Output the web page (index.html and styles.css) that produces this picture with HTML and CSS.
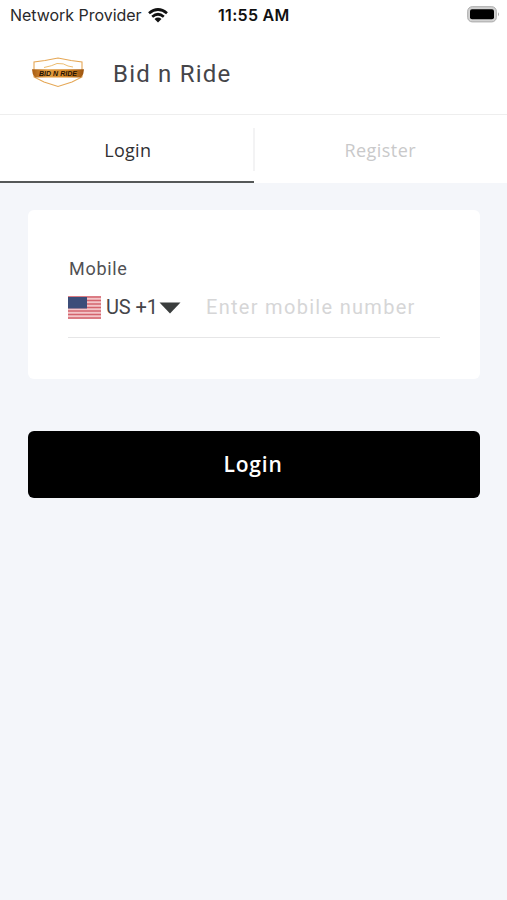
FILE: index.html
```html
<!DOCTYPE html>
<html lang="en">
<head>
<meta charset="utf-8">
<title>Bid n Ride</title>
<link rel="stylesheet" href="styles.css">
</head>
<body>
<div class="status">
  <span class="carrier">Network Provider</span>
  <svg class="wifi" width="20" height="15" viewBox="0 0 20 15" fill="none" stroke="#111" stroke-width="2.700"><path d="M1 5.3Q10-2.3 19 5.3M4.2 8.7Q10 3.8 15.8 8.7"/><path d="M6.5 11Q10 8.2 13.5 11L10 14.5Z" fill="#111" stroke="none"/></svg>
  <span class="time">11:55 AM</span>
  <svg class="battery" width="33" height="17" viewBox="0 0 33 17"><rect x=".7" y=".7" width="28.6" height="15.2" rx="4.5" fill="#d2d2d2" stroke="#aaa"/><rect x="3" y="3.3" width="24" height="10" rx="2" fill="#000"/><path d="M31 6.3q2 2 0 4z" fill="#aaa"/></svg>
</div>
<header class="header">
  <svg class="logo" width="52" height="31" viewBox="0 0 52 31">
    <defs><linearGradient id="gold"><stop offset="0" stop-color="#a85b10"/><stop offset=".3" stop-color="#e3a044"/><stop offset=".65" stop-color="#d98a27"/><stop offset="1" stop-color="#9c5410"/></linearGradient></defs>
    <path d="M2 13V5L13 3.5 26 1 39 3.5 50 5V20L40 25 26 29.500 12 25 2 20Z" fill="#fff" stroke="#e5a755" stroke-width="1.1"/>
    <path d="M12 10.500Q20 9 25 6.500Q32 6 36 9L41 10" fill="none" stroke="#edbd71"/>
    <path d="M0 12.200H52Q52 17 49 20.500H3Q0 17 0 12.200Z" fill="url(#gold)"/>
    <text class="logo-text" x="7" y="19" textLength="38">BID N RIDE</text>
  </svg>
  <h1 class="title">Bid n Ride</h1>
</header>
<nav class="tabs">
  <a class="tab active"><span>Login</span></a>
  <i class="divider"></i>
  <a class="tab"><span class="register">Register</span></a>
</nav>
<main class="content">
  <section class="card">
    <div class="label"><span>Mobile</span></div>
    <div class="field">
      <svg class="flag" width="33" height="23" viewBox="0 0 33 23"><path fill="#f3c5c8" d="M0 0h33v23H0z"/><path d="M0 1h33M0 4.500h33M0 8h33M0 11.500h33M0 15h33M0 18.500h33M0 22h33" stroke="#d4646d" stroke-width="1.500"/><path fill="#3c4d79" d="M0 1h19v11.500H0z"/></svg>
      <span class="code">US +1</span>
      <svg class="caret" width="22" height="12" viewBox="0 0 22 12"><path d="M.5.5h21L11 11.500z" fill="#3b3e3e"/></svg>
      <span class="placeholder">Enter mobile number</span>
    </div>
  </section>
  <button class="submit">Login</button>
</main>
</body>
</html>
```

FILE: styles.css
```css
* { box-sizing: border-box; }
body { margin: 0; height: 900px; background: #f4f6fa; color: #454549; font-family: Roboto, sans-serif; overflow: hidden; white-space: nowrap; }
svg { display: block; flex: none; }
.status { height: 30px; background: #fff; display: flex; align-items: center; padding: 0 7px 0 10px; font: 16px/30px Inter, sans-serif; color: #29292b; }
.carrier { width: 138px; letter-spacing: -.03px; }
.time { margin-left: 50px; width: 80px; font-weight: 600; letter-spacing: .3px; color: #111; }
.battery { margin-left: auto; margin-top: -2px; }
.header { height: 85px; background: #fff; border-bottom: 1px solid #eee; display: flex; align-items: center; padding: 0 32px 0 32px; }
.logo { margin-top: 1px; }
.logo-text { font: italic 900 7px "Liberation Sans", sans-serif; fill: #241203; }
.title { margin: 3px 0 0 29px; font-size: 24px; line-height: 32px; font-weight: 400; letter-spacing: 1.2px; }
.tabs { height: 68px; background: #fff; display: flex; font-family: "Open Sans", sans-serif; font-size: 18px; }
.tab { flex: none; width: 50%; display: flex; justify-content: center; padding-top: 22px; line-height: 26px; color: #c9c9ca; }
.active { color: #303033; padding-left: 2px; border-bottom: 2px solid #555858; }
.tab span { letter-spacing: .3px; }
.tab .register { letter-spacing: .45px; }
.divider { width: 2px; height: 43px; margin: 13px -1px 0; background: #f3f3f4; }
.content { padding: 27px 27px 0 28px; }
.card { height: 169px; border-radius: 6px; background: #fff; padding: 46px 40px 0; }
.label { height: 27px; font-size: 18px; line-height: 26px; letter-spacing: .7px; padding-left: 1px; color: #515154; }
.field { height: 55px; border-bottom: 1px solid #e6e6e7; display: flex; align-items: center; padding-bottom: 5px; font-size: 20px; }
.code { width: 53px; margin: -2px 0 0 5px; letter-spacing: -.1px; }
.caret { margin-top: 1px; }
.placeholder { margin: -2px 0 0 25px; letter-spacing: 1.3px; color: #d6d6d7; }
.submit { display: block; width: 100%; height: 67px; margin: 52px 0 0; padding: 0 2px 0 0; border: 0; border-radius: 6px; background: #000; color: #fff; font: 600 21px/67px "Open Sans", sans-serif; letter-spacing: .8px; }
```
